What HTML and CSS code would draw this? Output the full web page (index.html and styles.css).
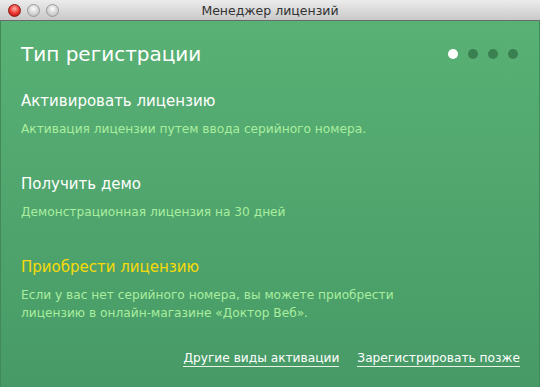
FILE: index.html
```html
<!DOCTYPE html>
<html lang="ru">
<head>
    <meta charset="UTF-8" />
    <title>Менеджер лицензий</title>
    <link rel="stylesheet" href="styles.css">
</head>
<body>
    <div class="window">
        <div class="titlebar">
            <div class="lights">
                <span class="light close"></span>
                <span class="light"></span>
                <span class="light"></span>
            </div>
            <div class="title">Менеджер лицензий</div>
        </div>

        <div class="content">
            <div class="head">
                <h1>Тип регистрации</h1>
                <div class="steps">
                    <span class="step active"></span>
                    <span class="step"></span>
                    <span class="step"></span>
                    <span class="step"></span>
                </div>
            </div>

            <div class="option">
                <div class="option-title">Активировать лицензию</div>
                <div class="option-text">Активация лицензии путем ввода серийного номера.</div>
            </div>

            <div class="option">
                <div class="option-title">Получить демо</div>
                <div class="option-text">Демонстрационная лицензия на 30 дней</div>
            </div>

            <div class="option">
                <div class="option-title buy">Приобрести лицензию</div>
                <div class="option-text">Если у вас нет серийного номера, вы можете приобрести<br>лицензию в онлайн-магазине «Доктор Веб».</div>
            </div>

            <div class="links">
                <a href="#">Другие виды активации</a>
                <a href="#">Зарегистрировать позже</a>
            </div>
        </div>
    </div>
</body>
</html>
```

FILE: styles.css
```css
:root {
    --green-top: #59b175;
    --green-bottom: #479a66;
    --sub: #a9ee9f;
    --yellow: #f7da08;
}

* {
    box-sizing: border-box;
    margin: 0;
    padding: 0;
}

body {
    width: 540px;
    height: 387px;
    overflow: hidden;
    font-family: 'DejaVu Sans', sans-serif;
    background: #2d5c3e;
}

.window {
    display: flex;
    flex-direction: column;
    height: 387px;
}

.titlebar {
    height: 21px;
    flex-shrink: 0;
    display: flex;
    align-items: center;
    position: relative;
    background: linear-gradient(#ececec, #c9c9c9);
    border-bottom: 1px solid #6a6a6a;
}

.lights {
    display: flex;
    gap: 6px;
    padding-left: 8px;
}

.light {
    width: 13px;
    height: 13px;
    border-radius: 50%;
    background: radial-gradient(circle at 50% 35%, #fdfdfd, #cfcfcf 60%, #b0b0b0);
    border: 1px solid #9a9a9a;
}

.light.close {
    background: radial-gradient(circle at 50% 35%, #ffb0a8, #e8332c 55%, #a8120e);
    border-color: #8c1a14;
}

.title {
    position: absolute;
    left: 0;
    right: 0;
    text-align: center;
    font-size: 12.5px;
    color: #333;
}

.content {
    flex: 1;
    background: linear-gradient(var(--green-top), var(--green-bottom));
    padding: 18px 20px 0 20px;
    display: flex;
    flex-direction: column;
    border-left: 1px solid #3f8a58;
    border-right: 1px solid #3f8a58;
}

.head {
    display: flex;
    justify-content: space-between;
    align-items: center;
}

h1 {
    font-weight: 400;
    font-size: 20px;
    color: #fff;
    line-height: 30px;
}

.steps {
    display: flex;
    gap: 10px;
    margin-right: 1px;
}

.step {
    width: 10px;
    height: 10px;
    border-radius: 50%;
    background: #3b8050;
}

.step.active {
    background: #fff;
}

.option {
    margin-top: 22px;
}

.option + .option {
    margin-top: 36px;
}

.option-title {
    font-size: 15px;
    color: #fff;
    line-height: 20px;
}

.option-title.buy {
    color: var(--yellow);
}

.option-text {
    margin-top: 9px;
    font-size: 12.2px;
    color: var(--sub);
    line-height: 18px;
}

.links {
    margin-top: auto;
    margin-bottom: 20px;
    margin-right: -1px;
    display: flex;
    justify-content: flex-end;
    gap: 18px;
}

.links a {
    font-size: 12.2px;
    color: #fff;
    text-decoration: none;
    border-bottom: 1px solid #e6f2e8;
    padding-bottom: 1px;
}
```
